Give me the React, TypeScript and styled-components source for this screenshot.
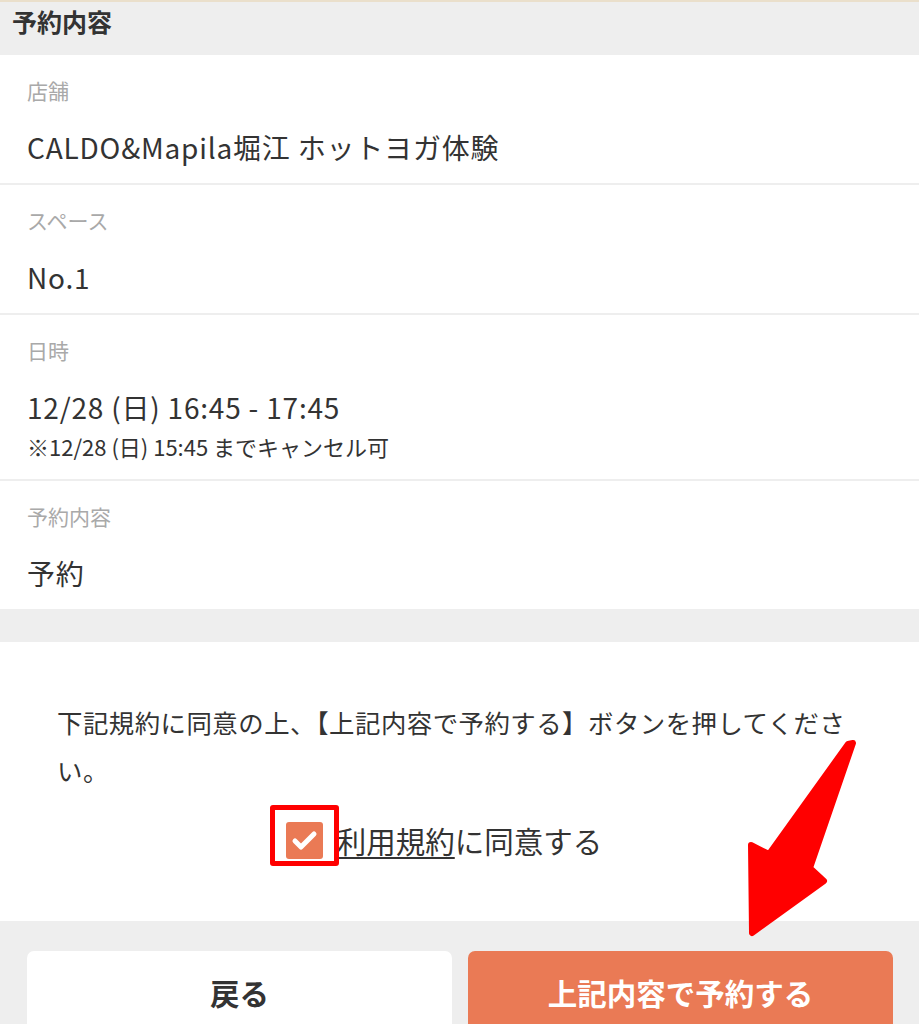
import React from "react";
import styled, { createGlobalStyle } from "styled-components";

const GlobalStyle = createGlobalStyle`
  html, body {
    margin: 0;
    padding: 0;
    background: #eeeeee;
  }
  body {
    font-family: "Noto Sans CJK JP", "Noto Sans", "Liberation Sans", sans-serif;
    color: #333333;
  }
`;

const Page = styled.div`
  position: relative;
  width: 919px;
  min-height: 1024px;
  background: #eeeeee;
  border-top: 2px solid #eadfcb;
  box-sizing: border-box;
  overflow: hidden;
`;

const SectionTitle = styled.h2`
  margin: 0;
  padding: 0 12px 14px;
  font-size: 25px;
  line-height: 39px;
  font-weight: 700;
  color: #333333;
`;

const DetailList = styled.div`
  display: flex;
  flex-direction: column;
  gap: 2px;
`;

const DetailRow = styled.div`
  background: #ffffff;
  padding: 19px 27px 16px;
`;

const Label = styled.div`
  font-size: 21px;
  line-height: 32px;
  color: #a9a9a9;
`;

const Value = styled.div`
  margin-top: 21px;
  font-size: 28px;
  line-height: 40px;
  letter-spacing: 0.8px;
  color: #333333;
`;

const Note = styled.div`
  margin-top: 2px;
  font-size: 22px;
  line-height: 34px;
  color: #333333;
`;

const AgreementSection = styled.div`
  margin-top: 33px;
  background: #ffffff;
  padding: 56px 45px 57px 57px;
`;

const Instruction = styled.p`
  margin: 0;
  font-size: 25.4px;
  line-height: 48px;
  letter-spacing: 0.5px;
  color: #333333;
`;

const CheckRow = styled.label`
  margin-top: 22px;
  display: flex;
  align-items: center;
  justify-content: center;
  gap: 14px;
  padding-right: 43px;
  height: 48px;
  font-size: 29.5px;
  color: #333333;
`;

const CheckWrap = styled.span`
  position: relative;
  display: inline-flex;
`;

const CheckBox = styled.span`
  width: 37px;
  height: 37px;
  border-radius: 3px;
  background: #ea7a55;
  display: flex;
  align-items: center;
  justify-content: center;
`;

const Highlight = styled.span`
  position: absolute;
  left: -16px;
  top: -17px;
  width: 69px;
  height: 61px;
  border: 5px solid #ff0000;
  border-radius: 3px;
  box-sizing: border-box;
`;

const TermsLink = styled.span`
  text-decoration: underline;
  text-decoration-thickness: 2px;
  text-underline-offset: 4px;
`;

const Footer = styled.div`
  display: grid;
  grid-template-columns: 1fr 1fr;
  gap: 16px;
  padding: 30px 26px 0 27px;
`;

const Button = styled.button<{ $primary?: boolean }>`
  height: 82px;
  border: none;
  border-radius: 7px;
  font-family: inherit;
  font-size: 29.5px;
  font-weight: 700;
  background: ${(p) => (p.$primary ? "#ea7a55" : "#ffffff")};
  color: ${(p) => (p.$primary ? "#ffffff" : "#333333")};
`;

const Arrow = styled.svg`
  position: absolute;
  left: 0;
  top: 0;
  pointer-events: none;
`;

const details = [
  { label: "店舗", value: "CALDO&Mapila堀江 ホットヨガ体験" },
  { label: "スペース", value: "No.1" },
  {
    label: "日時",
    value: "12/28 (日) 16:45 - 17:45",
    note: "※12/28 (日) 15:45 までキャンセル可",
  },
  { label: "予約内容", value: "予約" },
];

export default function App() {
  return (
    <>
      <GlobalStyle />
      <Page>
        <SectionTitle>予約内容</SectionTitle>
        <DetailList>
          {details.map((d) => (
            <DetailRow key={d.label}>
              <Label>{d.label}</Label>
              <Value>{d.value}</Value>
              {d.note && <Note>{d.note}</Note>}
            </DetailRow>
          ))}
        </DetailList>
        <AgreementSection>
          <Instruction>
            下記規約に同意の上、【上記内容で予約する】ボタンを押してください。
          </Instruction>
          <CheckRow>
            <CheckWrap>
              <CheckBox>
                <svg width="37" height="37" viewBox="0 0 37 37">
                  <path
                    d="M9 19 L15 25 L28 12"
                    fill="none"
                    stroke="#ffffff"
                    strokeWidth="5"
                    strokeLinecap="round"
                    strokeLinejoin="round"
                  />
                </svg>
              </CheckBox>
              <Highlight />
            </CheckWrap>
            <span>
              <TermsLink>利用規約</TermsLink>に同意する
            </span>
          </CheckRow>
        </AgreementSection>
        <Footer>
          <Button>戻る</Button>
          <Button $primary>上記内容で予約する</Button>
        </Footer>
        <Arrow width="919" height="1024" viewBox="0 0 919 1024">
          <polygon
            points="848,742 853,741 810,866 824,879 752,931 751,843 769,852"
            fill="#ff0000"
            stroke="#ff0000"
            strokeWidth="6"
            strokeLinejoin="round"
          />
        </Arrow>
      </Page>
    </>
  );
}
